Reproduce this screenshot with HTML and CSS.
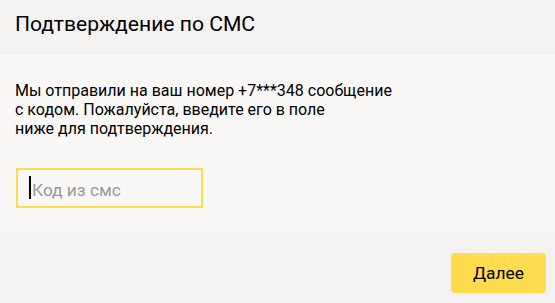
FILE: index.html
```html
<!DOCTYPE html>
<html lang="ru">
<head>
<meta charset="utf-8">
<title>Подтверждение по СМС</title>
<link rel="stylesheet" href="styles.css">
</head>
<body>
<div class="dialog">
  <header class="dialog-header">
    <h1 class="dialog-title">Подтверждение по СМС</h1>
  </header>
  <main class="dialog-body">
    <p class="dialog-text">Мы отправили на ваш номер +7***348 сообщение<br>с кодом. Пожалуйста, введите его в поле<br>ниже для подтверждения.</p>
    <div class="code-field">
      <span class="caret"></span>
      <input class="code-input" type="text" placeholder="Код из смс">
    </div>
  </main>
  <footer class="dialog-footer">
    <button class="btn-next" type="button">Далее</button>
  </footer>
</div>
</body>
</html>
```

FILE: styles.css
```css
* { box-sizing: border-box; }
html, body {
  margin: 0;
  padding: 0;
  width: 555px;
  height: 303px;
  overflow: hidden;
  background: #f9f8f6;
  font-family: Roboto, "Noto Sans", Arial, sans-serif;
  color: #000;
}
.dialog {
  display: flex;
  flex-direction: column;
  height: 303px;
}
.dialog-header {
  height: 55px;
  background: #f3f2f0;
  padding: 10px 0 0 15px;
}
.dialog-title {
  margin: 0;
  font-size: 21.1px;
  font-weight: 400;
  line-height: 28px;
  color: #000;
}
.dialog-body {
  flex: 1;
  padding: 26px 0 0 15px;
}
.dialog-text {
  margin: 0;
  font-size: 16px;
  line-height: 19px;
  color: #000;
}
.code-field {
  position: relative;
  margin: 30px 0 0 1px;
  width: 187px;
  height: 40px;
  border: 2px solid #ffdb4d;
  background: #f9f8f6;
}
.code-input {
  width: 100%;
  height: 100%;
  border: 0;
  outline: 0;
  background: transparent;
  padding: 3px 0 0 14px;
  font-family: inherit;
  font-size: 17.3px;
  color: #000;
}
.code-input::placeholder { color: #999; }
.caret {
  position: absolute;
  left: 11px;
  top: 6px;
  width: 2px;
  height: 23px;
  background: #000;
}
.dialog-footer {
  height: 71px;
  background: #f3f2f0;
  display: flex;
  justify-content: flex-end;
  align-items: flex-start;
  padding: 21px 9px 0 0;
}
.btn-next {
  width: 95px;
  height: 40px;
  border: 0;
  border-radius: 4px;
  background: #ffdb4d;
  font-family: inherit;
  font-size: 17.4px;
  color: #000;
  cursor: pointer;
}
```
